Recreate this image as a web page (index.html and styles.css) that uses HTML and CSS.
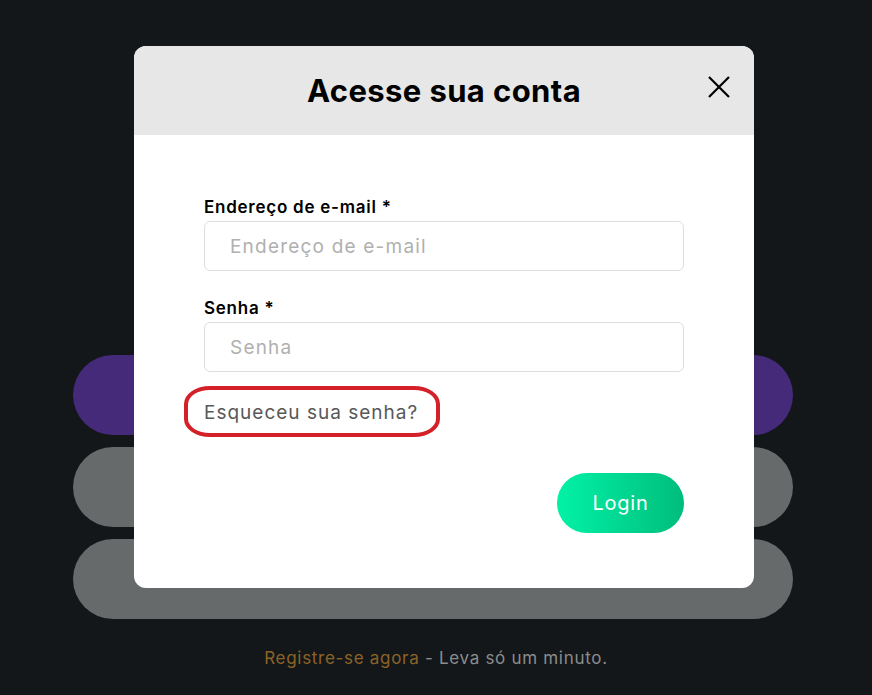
FILE: index.html
```html
<!DOCTYPE html>
<html lang="pt-BR">
<head>
    <meta charset="UTF-8">
    <title>Acesse sua conta</title>
    <link rel="stylesheet" href="styles.css">
</head>
<body>
    <div class="page">
        <div class="btn-stack">
            <div class="pill pill-purple"></div>
            <div class="pill pill-grey"></div>
            <div class="pill pill-grey"></div>
        </div>
        <p class="register"><a href="#" class="register-link">Registre-se agora</a> - Leva só um minuto.</p>
    </div>

    <!-- modal de login -->
    <div class="modal">
        <div class="modal-head">
            <h2>Acesse sua conta</h2>
            <span class="close">
                <svg width="22" height="22" viewBox="0 0 22 22"><path d="M1 1L21 21M21 1L1 21" stroke="#000" stroke-width="2.2" fill="none"/></svg>
            </span>
        </div>
        <form class="modal-body">
            <label class="field-label">Endereço de e-mail *</label>
            <input class="field" type="email" placeholder="Endereço de e-mail">
            <label class="field-label">Senha *</label>
            <input class="field" type="password" placeholder="Senha">
            <div class="forgot-row">
                <a href="#" class="forgot">Esqueceu sua senha?</a>
            </div>
            <div class="actions">
                <button type="button" class="login">Login</button>
            </div>
        </form>
    </div>
</body>
</html>
```

FILE: styles.css
```css
body {
    margin: 0;
    background: #13171a;
    font-family: "Inter", "Open Sans", sans-serif;
    height: 695px;
    overflow: hidden;
}
.page {
    padding-top: 355px;
}
.btn-stack {
    display: flex;
    flex-direction: column;
    gap: 12px;
    width: 720px;
    margin-left: 73px;
}
.pill {
    height: 80px;
    border-radius: 40px;
}
.pill-purple { background: #452a7a; }
.pill-grey { background: #676a6b; }
.register {
    margin: 29px 0 0;
    text-align: center;
    font-size: 17px;
    letter-spacing: 0.7px;
    color: #8b8c8d;
}
.register-link { color: #8c6326; text-decoration: none; }

.modal {
    position: absolute;
    left: 134px; top: 46px;
    width: 620px; height: 542px;
    background: #fff;
    border-radius: 12px;
    overflow: hidden;
}
.modal-head {
    position: relative;
    height: 89px;
    background: #e7e7e7;
    display: flex;
    align-items: center;
    justify-content: center;
}
.modal-head h2 {
    margin: 0;
    font-size: 31px;
    font-weight: 700;
    letter-spacing: 0.4px;
    color: #000;
}
.close {
    position: absolute;
    right: 24px; top: 30px;
    line-height: 0;
    cursor: pointer;
}
.modal-body {
    display: flex;
    flex-direction: column;
    padding: 62px 70px 0;
}
.field-label {
    font-size: 17px;
    font-weight: 600;
    letter-spacing: 0.75px;
    color: #000;
    margin-bottom: 4px;
}
.field {
    height: 50px;
    box-sizing: border-box;
    border: 1px solid #dedede;
    border-radius: 6px;
    padding: 0 25px;
    font-family: inherit;
    font-size: 19px;
    letter-spacing: 1.2px;
    margin-bottom: 27px;
}
.field::placeholder { color: #b0b0b0; }
.field:last-of-type { margin-bottom: 0; }
.forgot-row {
    margin-top: 29px;
}
.forgot {
    position: relative;
    font-size: 19px;
    letter-spacing: 1px;
    color: #585858;
    text-decoration: none;
}
.forgot::after {
    content: "";
    position: absolute;
    left: -20px; right: -22px; top: -15px; bottom: -13px;
    border: 4px solid #d42029;
    border-radius: 26px / 18px;
}
.actions {
    display: flex;
    justify-content: flex-end;
    margin-top: 49px;
}
.login {
    width: 127px;
    height: 60px;
    border: none;
    border-radius: 30px;
    background: linear-gradient(90deg, #02f2a6, #00bd7c);
    color: #fff;
    font-family: inherit;
    font-size: 20px;
    letter-spacing: 0.8px;
}
```
